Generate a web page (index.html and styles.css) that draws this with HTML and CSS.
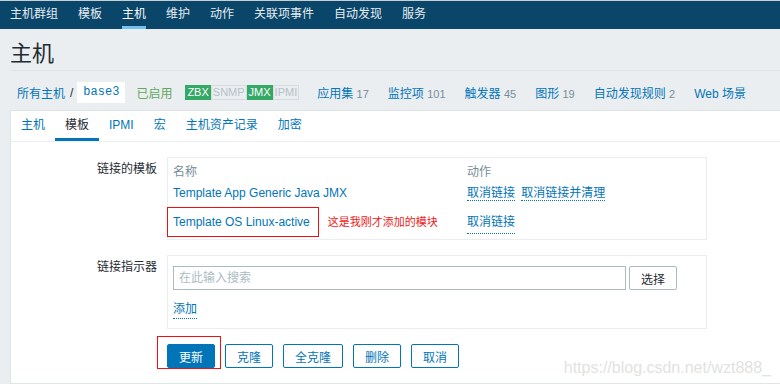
FILE: index.html
```html
<!DOCTYPE html>
<html lang="zh-CN">

<head>
    <meta charset="UTF-8">
    <meta name="viewport" content="width=device-width, initial-scale=1.0">
    <title>主机</title>
    <link rel="stylesheet" href="styles.css">
</head>

<body>

    <header class="topnav">
        <ul class="menu">
            <li>主机群组</li>
            <li>模板</li>
            <li class="active">主机</li>
            <li>维护</li>
            <li>动作</li>
            <li>关联项事件</li>
            <li>自动发现</li>
            <li>服务</li>
        </ul>
    </header>

    <main class="page">
        <h1 class="title">主机</h1>

        <div class="crumbs">
            <a class="link" href="#">所有主机</a>
            <span class="sep">/</span>
            <span class="hostname">base3</span>
            <span class="enabled">已启用</span>
            <span class="badges">
                <span class="badge on">ZBX</span><span class="badge">SNMP</span><span class="badge on">JMX</span><span class="badge">IPMI</span>
            </span>
            <span class="counts">
                <a class="link" href="#">应用集</a> <sup>17</sup>
            </span>
            <span class="counts">
                <a class="link" href="#">监控项</a> <sup>101</sup>
            </span>
            <span class="counts">
                <a class="link" href="#">触发器</a> <sup>45</sup>
            </span>
            <span class="counts">
                <a class="link" href="#">图形</a> <sup>19</sup>
            </span>
            <span class="counts">
                <a class="link" href="#">自动发现规则</a> <sup>2</sup>
            </span>
            <span class="counts">
                <a class="link" href="#">Web 场景</a>
            </span>
        </div>

        <div class="panel">
            <ul class="tabs">
                <li>主机</li>
                <li class="current">模板</li>
                <li>IPMI</li>
                <li>宏</li>
                <li>主机资产记录</li>
                <li>加密</li>
            </ul>

            <div class="form">
                <div class="label">链接的模板</div>
                <div class="box linked">
                    <div class="th">名称</div>
                    <div class="th">动作</div>

                    <div class="td"><a class="link" href="#">Template App Generic Java JMX</a></div>
                    <div class="td">
                        <a class="action" href="#">取消链接</a>
                        <a class="action" href="#">取消链接并清理</a>
                    </div>

                    <div class="td last">
                        <span class="mark"><a class="link" href="#">Template OS Linux-active</a></span>
                        <span class="note">这是我刚才添加的模块</span>
                    </div>
                    <div class="td last">
                        <a class="action" href="#">取消链接</a>
                    </div>
                </div>

                <div class="label">链接指示器</div>
                <div class="box linker">
                    <div class="search">
                        <input type="text" class="search-input" placeholder="在此输入搜索">
                        <button type="button" class="btn-grey">选择</button>
                    </div>
                    <a class="action add" href="#">添加</a>
                </div>

                <div></div>
                <div class="buttons">
                    <span class="marked">
                        <button type="button" class="btn primary">更新</button>
                    </span>
                    <button type="button" class="btn">克隆</button>
                    <button type="button" class="btn">全克隆</button>
                    <button type="button" class="btn">删除</button>
                    <button type="button" class="btn">取消</button>
                </div>
            </div>

            <div class="watermark">https://blog.csdn.net/wzt888_</div>
        </div>
    </main>

</body>

</html>
```

FILE: styles.css
```css
* {
    margin: 0px;
    padding: 0px;
    box-sizing: border-box;
    font-family: "Liberation Sans", "Noto Sans CJK SC", sans-serif;
}

body {
    background-color: #ebeef1;
    color: #1f2c33;
    font-size: 12px;
    overflow: hidden;
}

ul {
    list-style: none;
}

a {
    text-decoration: none;
}

.link {
    color: #0275b8;
}

/* 上方选单 */
.topnav {
    height: 29px;
    border-top: 1px solid #c9ced3;
    background-color: #0a466a;
}

.menu {
    display: flex;
}

.menu li {
    margin: 0 10px;
    padding-top: 2px;
    line-height: 23px;
    border-bottom: 3px solid transparent;
    color: #e6edf2;
    font-size: 12px;
}

.menu li.active {
    color: #ffffff;
    border-bottom-color: #76c1f0;
}

.page {
    padding-left: 10px;
}

.title {
    height: 42px;
    padding-top: 8px;
    line-height: 34px;
    font-size: 22px;
    font-weight: normal;
    color: #1f2c33;
    border-bottom: 1px solid #dfe4e7;
}

/* 麵包屑 */
.crumbs {
    display: flex;
    align-items: center;
    height: 39px;
    padding: 11px 0 7px 7px;
    white-space: nowrap;
}

.sep {
    margin: 0 2px 0 5px;
    color: #1f2c33;
}

.hostname {
    display: inline-block;
    height: 21px;
    line-height: 21px;
    padding: 0 6px;
    background-color: #fff;
    color: #0275b8;
    font-family: "Liberation Mono", monospace;
    font-size: 12px;
    margin-left: 2px;
}

.enabled {
    margin-left: 11px;
    color: #5fa85f;
}

.badges {
    display: flex;
    margin-left: 13px;
    margin-right: 8px;
}

.badge {
    display: inline-block;
    height: 15px;
    line-height: 13px;
    padding: 0 1px;
    font-size: 11px;
    color: #b5c1c8;
    background-color: #ebeef1;
    border: 1px solid #d5dce0;
}

.badge.on {
    color: #fff;
    background-color: #34a865;
    border-color: #34a865;
}

.counts {
    padding: 0 9px 0 10px;
}

.counts sup {
    vertical-align: baseline;
    font-size: 11px;
    color: #768d99;
}

/* 白色面板 */
.panel {
    position: relative;
    background-color: #fff;
    border: 1px solid #dfe4e7;
    border-right: none;
    padding-bottom: 15px;
}

.tabs {
    display: flex;
    border-bottom: 1px solid #ebeef1;
}

.tabs li {
    padding: 2px 10px 0;
    line-height: 25px;
    border-bottom: 3px solid transparent;
    color: #0275b8;
}

.tabs li.current {
    color: #1f2c33;
    border-bottom-color: #0275b8;
}

.form {
    display: grid;
    grid-template-columns: 146px 540px;
    column-gap: 10px;
    row-gap: 15px;
    padding-top: 15px;
}

.label {
    text-align: right;
    line-height: 24px;
}

.box {
    border: 1px solid #ebeef1;
    padding: 0 5px;
}

.linked {
    display: grid;
    grid-template-columns: 294px 1fr;
    padding-top: 4px;
    padding-bottom: 2px;
}

.th {
    line-height: 20px;
    color: #768d99;
}

.td {
    line-height: 22px;
}

.td.last {
    display: flex;
    align-items: center;
    padding-top: 3px;
}

.action {
    color: #0275b8;
    border-bottom: 1px dotted #0275b8;
    margin-right: 3px;
}

.mark {
    display: inline-block;
    height: 30px;
    line-height: 28px;
    margin-left: -6px;
    padding: 0 8px 0 5px;
    border: 1px solid #f01010;
}

.note {
    margin-left: 9px;
    font-size: 11px;
    color: #f02020;
}

.linker {
    padding-top: 10px;
    padding-bottom: 9px;
}

.search {
    display: flex;
    gap: 3px;
}

.search-input {
    width: 453px;
    height: 24px;
    padding: 0 5px;
    border: 1px solid #acbbc2;
    font-size: 12px;
    color: #1f2c33;
}

.search-input::placeholder {
    color: #acbbc2;
}

.btn-grey {
    width: 48px;
    height: 24px;
    border: 1px solid #acbbc2;
    border-radius: 2px;
    background-color: #fff;
    color: #1f2c33;
    font-size: 12px;
}

.add {
    display: inline-block;
    margin-top: 10px;
    line-height: 18px;
}

.buttons {
    display: flex;
    gap: 10px;
}

.btn {
    height: 24px;
    padding: 0 11px;
    border: 1px solid #0275b8;
    border-radius: 2px;
    background-color: #fff;
    color: #0275b8;
    font-size: 12px;
}

.btn.primary {
    background-color: #0275b8;
    color: #fff;
}

/* 截圖上的紅框 */
.marked {
    position: relative;
    display: flex;
}

.marked:after {
    content: "";
    position: absolute;
    left: -10px;
    top: -8px;
    width: 62px;
    height: 31px;
    border: 1px solid #f01010;
}

.watermark {
    position: absolute;
    right: 9px;
    bottom: 6px;
    font-size: 16px;
    color: #e2e2e2;
}
```
